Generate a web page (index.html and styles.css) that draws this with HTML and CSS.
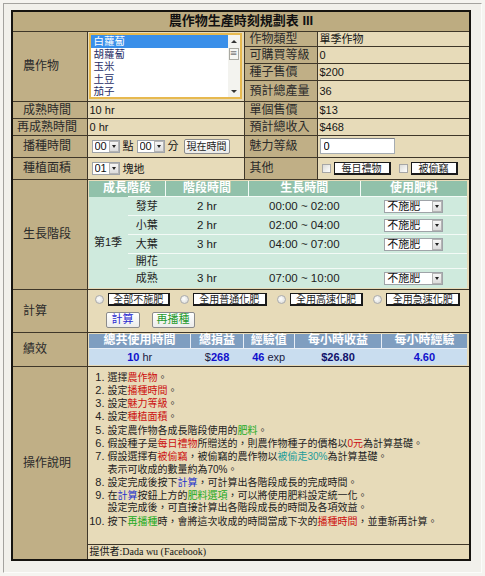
FILE: index.html
```html
<!DOCTYPE html>
<html lang="zh-Hant">
<head>
<meta charset="utf-8">
<title>農作物生產時刻規劃表 III</title>
<link rel="stylesheet" href="styles.css">
</head>
<body>
<div class="frame">
<table class="main">
  <colgroup><col class="c1"><col class="c2"><col class="c3"><col class="c4"></colgroup>
  <tr class="r-title"><th colspan="4" class="title">農作物生產時刻規劃表 III</th></tr>
  <tr class="r-s1">
    <td rowspan="4" class="lbl">農作物</td>
    <td rowspan="4" class="val list-cell">
      <div class="listbox" role="listbox">
        <ul class="opts">
          <li class="on">白蘿蔔</li><li>胡蘿蔔</li><li>玉米</li><li>土豆</li><li>茄子</li>
        </ul>
        <div class="sbar">
          <span class="sbtn up"></span>
          <span class="thumb">≡</span>
          <span class="track"></span>
          <span class="sbtn dn"></span>
        </div>
      </div>
    </td>
    <td class="lbl2">作物類型</td><td class="val">單季作物</td>
  </tr>
  <tr class="r-s2"><td class="lbl2">可購買等級</td><td class="val">0</td></tr>
  <tr class="r-s3"><td class="lbl2">種子售價</td><td class="val">$200</td></tr>
  <tr class="r-s4"><td class="lbl2">預計總產量</td><td class="val">36</td></tr>
  <tr class="r-17"><td class="lbl">成熟時間</td><td class="val">10 hr</td><td class="lbl2">單個售價</td><td class="val">$13</td></tr>
  <tr class="r-17"><td class="lbl lbl-wide">再成熟時間</td><td class="val">0 hr</td><td class="lbl2">預計總收入</td><td class="val">$468</td></tr>
  <tr class="r-22">
    <td class="lbl">播種時間</td>
    <td class="val ctl">
      <span class="sel w28"><select><option>00</option></select><span class="arr"></span></span><span class="unit">點</span><span class="sel w28"><select><option>00</option></select><span class="arr"></span></span><span class="unit">分</span><button class="xp now">現在時間</button>
    </td>
    <td class="lbl2">魅力等級</td>
    <td class="val ctl ctl-r"><input class="txt" type="text" value="0"></td>
  </tr>
  <tr class="r-22">
    <td class="lbl">種植面積</td>
    <td class="val ctl"><span class="sel w28"><select><option>01</option></select><span class="arr"></span></span><span class="unit">塊地</span></td>
    <td class="lbl2">其他</td>
    <td class="val ctl ctl-r"><input class="chk" type="checkbox"><button class="flat gift">每日禮物</button><input class="chk" type="checkbox"><button class="flat stolen">被偷竊</button></td>
  </tr>
  <tr class="r-grow">
    <td class="lbl">生長階段</td>
    <td colspan="3" class="val nest">
      <table class="grow">
        <colgroup><col class="g1"><col class="g2"><col class="g3"><col class="g4"><col class="g5"></colgroup>
        <tr><th colspan="2">成長階段</th><th>階段時間</th><th>生長時間</th><th>使用肥料</th></tr>
        <tr><td rowspan="5" class="season">第1季</td><td class="stage">發芽</td><td>2 hr</td><td>00:00 ~ 02:00</td><td><span class="sel w59"><select><option>不施肥</option></select><span class="arr"></span></span></td></tr>
        <tr><td class="stage">小葉</td><td>2 hr</td><td>02:00 ~ 04:00</td><td><span class="sel w59"><select><option>不施肥</option></select><span class="arr"></span></span></td></tr>
        <tr><td class="stage">大葉</td><td>3 hr</td><td>04:00 ~ 07:00</td><td><span class="sel w59"><select><option>不施肥</option></select><span class="arr"></span></span></td></tr>
        <tr class="short"><td class="stage">開花</td><td></td><td></td><td></td></tr>
        <tr><td class="stage">成熟</td><td>3 hr</td><td>07:00 ~ 10:00</td><td><span class="sel w59"><select><option>不施肥</option></select><span class="arr"></span></span></td></tr>
      </table>
    </td>
  </tr>
  <tr class="r-calc">
    <td class="lbl">計算</td>
    <td colspan="3" class="val calc">
      <div class="calc-row">
        <input class="rad" type="radio" name="fert"><button class="flat b5">全部不施肥</button>
        <input class="rad" type="radio" name="fert"><button class="flat b6">全用普通化肥</button>
        <input class="rad" type="radio" name="fert"><button class="flat b6">全用高速化肥</button>
        <input class="rad" type="radio" name="fert"><button class="flat b6">全用急速化肥</button>
      </div>
      <div class="calc-row second">
        <button class="xp act blue">計算</button>
        <button class="xp act green">再播種</button>
      </div>
    </td>
  </tr>
  <tr class="r-perf">
    <td class="lbl">績效</td>
    <td colspan="3" class="val nest">
      <table class="perf">
        <colgroup><col class="p1"><col class="p2"><col class="p3"><col class="p4"><col class="p5"></colgroup>
        <tr><th>總共使用時間</th><th>總損益</th><th>經驗值</th><th>每小時收益</th><th>每小時經驗</th></tr>
        <tr><td>10 <span class="unitn">hr</span></td><td><span class="unitn">$</span>268</td><td>46 <span class="unitn">exp</span></td><td><span class="dk">$26.80</span></td><td>4.60</td></tr>
      </table>
    </td>
  </tr>
  <tr class="r-help">
    <td rowspan="2" class="lbl">操作說明</td>
    <td colspan="3" class="val help">
      <ol class="steps">
        <li>選擇<span class="red">農作物</span>。</li>
        <li>設定<span class="red">播種時間</span>。</li>
        <li>設定<span class="red">魅力等級</span>。</li>
        <li>設定<span class="red">種植面積</span>。</li>
        <li>設定農作物各成長階段使用的<span class="green">肥料</span>。</li>
        <li>假設種子是<span class="red">每日禮物</span>所贈送的，則農作物種子的價格以<span class="red">0元</span>為計算基礎。</li>
        <li>假設選擇有<span class="red">被偷竊</span>，被偷竊的農作物以<span class="teal">被偷走30%</span>為計算基礎。<br>表示可收成的數量約為70%。</li>
        <li>設定完成後按下<span class="blue">計算</span>，可計算出各階段成長的完成時間。</li>
        <li>在<span class="blue">計算</span>按鈕上方的<span class="green">肥料選項</span>，可以將使用肥料設定統一化。<br>設定完成後，可直接計算出各階段成長的時間及各項效益。</li>
        <li>按下<span class="green">再播種</span>時，會將這次收成的時間當成下次的<span class="red">播種時間</span>，並重新再計算。</li>
      </ol>
    </td>
  </tr>
  <tr class="r-foot"><td colspan="3" class="val foot">提供者:Dada wu (Facebook)</td></tr>
</table>
</div>
</body>
</html>
```
FILE: styles.css
```css
* { box-sizing: border-box; }
html, body { margin: 0; padding: 0; }
body {
  width: 485px; height: 576px; overflow: hidden;
  background: #f5f4f0;
  font-family: "Liberation Sans", "Noto Sans CJK TC", sans-serif;
  font-size: 12px; color: #151515;
}
.frame {
  margin: 3px 0 0 3px;
  width: 479px; height: 570px;
  border: 1px solid; border-color: #a4a39f #fcfcfa #fcfcfa #a4a39f;
  background: #f1f0eb;
  padding: 6px 0 0 7px;
}
.main {
  border-collapse: collapse; table-layout: fixed;
  width: 458px; border: 2px solid #161410;
}
.c1 { width: 75px; } .c2 { width: 157px; } .c3 { width: 73px; } .c4 { width: 153px; }
.main > tbody > tr > td, .main > tbody > tr > th { border: 1px solid #3f3729; padding: 0; line-height: 14px; }
.title { background: #bdac81; font-size: 13px; font-weight: bold; text-align: center; height: 20px; color: #111; }
.lbl { background: #c0af86; padding-left: 10px !important; font-size: 12px; text-align: left; color: #2a2a2a; }
.lbl-wide { padding-left: 4px !important; }
.lbl2 { background: #c0af86; padding-left: 5px !important; font-size: 12px; color: #2a2a2a; }
.val { background: #e7dbb9; padding-left: 2px !important; font-size: 11px; }
.r-s1 { height: 15px; } .r-s2 { height: 17px; } .r-s3 { height: 17px; } .r-s4 { height: 21px; }
.r-17 { height: 17px; } .r-22 { height: 22px; }
.r-grow { height: 109px; } .r-calc { height: 43px; } .r-perf { height: 33px; }
.r-help { height: 178px; } .r-foot { height: 13px; }

/* list box */
.list-cell { padding: 0 0 0 1px !important; vertical-align: middle; }
.listbox { display: flex; width: 153px; height: 66px; border: 2px solid #e7b94f; background: #fff; }
.opts { flex: 1; margin: 0; padding: 0; list-style: none; overflow: hidden; font-size: 10.5px; line-height: 12.6px; color: #1f2d66; }
.opts li { padding-left: 3px; height: 12.6px; }
.opts li.on { background: #3a8fe9; color: #fff; }
.sbar { width: 12px; display: flex; flex-direction: column; background: #f3f3ef; }
.sbtn { height: 12px; display: flex; align-items: center; justify-content: center; background: #f3f3ef; }
.sbtn.up::after { content: ""; border-left: 3px solid transparent; border-right: 3px solid transparent; border-bottom: 3px solid #333; }
.sbtn.dn::after { content: ""; border-left: 3px solid transparent; border-right: 3px solid transparent; border-top: 3px solid #333; }
.thumb { height: 12px; margin: 1px 1px 0; border: 1px solid #a9a9a2; background: #f6f6f2; font-size: 9px; line-height: 9px; text-align: center; color: #777; font-family: "DejaVu Sans", sans-serif; }
.track { flex: 1; }

/* controls */
.ctl { padding-left: 4px !important; white-space: nowrap; }
.ctl-r { padding-left: 2px !important; }
.sel { display: inline-flex; align-items: center; height: 13px; border: 1px solid #9fa3a8; background: #fff; vertical-align: middle; }
.sel select { appearance: none; -webkit-appearance: none; border: 0; background: transparent; font: 11px "Liberation Sans", "Noto Sans CJK TC", sans-serif; padding: 0 0 0 2px; margin: 0; height: 11px; line-height: 11px; flex: 1; min-width: 0; outline: none; color: #111; }
.w28 { width: 28px; } .w59 { width: 59px; }
.arr { width: 10px; height: 11px; margin-right: 0; background: linear-gradient(#f6f6f6, #dcdcdc); border: 1px solid #b4b4b4; display: flex; align-items: center; justify-content: center; }
.arr::after { content: ""; border-left: 2.5px solid transparent; border-right: 2.5px solid transparent; border-top: 3px solid #222; }
.unit { display: inline-block; vertical-align: middle; font-size: 11px; margin: 0 3px; }
button { font-family: "Liberation Sans", "Noto Sans CJK TC", sans-serif; margin: 0; cursor: default; }
.xp { font-size: 10px; height: 15px; padding: 0 5px; border: 1px solid #8b8b8b; border-radius: 2px; background: linear-gradient(#ffffff, #ececea); color: #222; vertical-align: middle; line-height: 13px; }
.now { width: 46px; margin-left: 2px; padding: 0; }
.txt { width: 75px; height: 16px; border: 1px solid #a5acb2; border-top-color: #7a7f85; padding: 0 3px; font: 11px "Liberation Sans", sans-serif; vertical-align: middle; background: #fff; }
.chk { appearance: none; -webkit-appearance: none; width: 9px; height: 9px; margin: 0 3px 0 2px; border: 1px solid #a6a6a6; background: linear-gradient(135deg, #dcdcd8, #ffffff); vertical-align: middle; }
.flat { font-size: 10px; height: 13px; line-height: 11px; padding: 0; border: 1px solid #1a1a1a; border-right-width: 2px; border-bottom-width: 2px; background: #fff; color: #222; vertical-align: middle; }
.gift { width: 57px; margin-right: 6px; }
.stolen { width: 47px; }

/* nested tables */
.nest { padding: 1px 2px 1px 1px !important; vertical-align: middle; }
.grow, .perf { border-collapse: collapse; table-layout: fixed; width: 100%; }
.g1 { width: 39px; } .g2 { width: 38px; } .g3 { width: 82px; } .g4 { width: 112px; } .g5 { width: 106px; }
.grow th { background: #91c1aa; color: #fff; font-size: 12px; font-weight: bold; height: 16px; line-height: 14px; padding: 0; border-left: 1px solid #f4fbf7; }
.grow th:first-child { border-left: 0; }
.grow td { background: #cfeadd; border-top: 1px solid #f3faf6; text-align: center; font-size: 11.5px; height: 19px; line-height: 14px; padding: 0; color: #1c1c1c; }
.grow tr.short td { height: 15px; }
.grow td.season { border-top: 0; font-size: 11px; }
.grow td.stage { font-size: 11px; }
.p1 { width: 102px; } .p2 { width: 52px; } .p3 { width: 51px; } .p4 { width: 87px; } .p5 { width: 85px; }
.perf th { background: #7f9ec0; color: #fff; font-size: 12px; font-weight: bold; height: 15px; line-height: 13px; padding: 0; border-left: 1px solid #e8eef6; }
.perf th:first-child { border-left: 0; }
.perf td { background: #c9ddef; color: #1010cc; font-size: 11px; font-weight: bold; text-align: center; height: 16px; line-height: 14px; padding: 0; border-top: 1px solid #e8eef6; }
.unitn { color: #1a1a40; font-weight: normal; }
.dk { color: #10106a; }

/* calc */
.calc { padding: 3px 0 0 6px !important; vertical-align: top; }
.calc-row { display: flex; align-items: center; }
.rad { appearance: none; -webkit-appearance: none; width: 9px; height: 9px; margin: 0 4px 0 1px; border: 1px solid #aaaaaa; border-radius: 50%; background: radial-gradient(circle at 40% 40%, #ffffff, #d6d6d2); flex: none; }
.b5 { width: 65px; margin-right: 9px; }
.b6 { width: 77px; margin-right: 9px; }
.second { margin-top: 6px; padding-left: 12px; }
.act { font-size: 11px; height: 16px; padding: 0; }
.blue.act { width: 34px; color: #2a2ad0; margin-right: 12px; }
.green.act { width: 43px; color: #1e9a2c; }

/* help */
.help { vertical-align: top; padding: 4px 0 0 0 !important; }
.steps { margin: 0; padding: 0 0 0 20px; font-size: 10px; line-height: 12.3px; color: #222; }
.steps li::marker { font-size: 11px; }
.red { color: #cc1010; }
.green { color: #22aa22; }
.blue { color: #2233cc; }
.teal { color: #229b99; }
.foot { font-family: "Liberation Serif", "Noto Sans CJK TC", serif; font-size: 10px; line-height: 12px; border-top: 1px solid #2a2418 !important; }
```
